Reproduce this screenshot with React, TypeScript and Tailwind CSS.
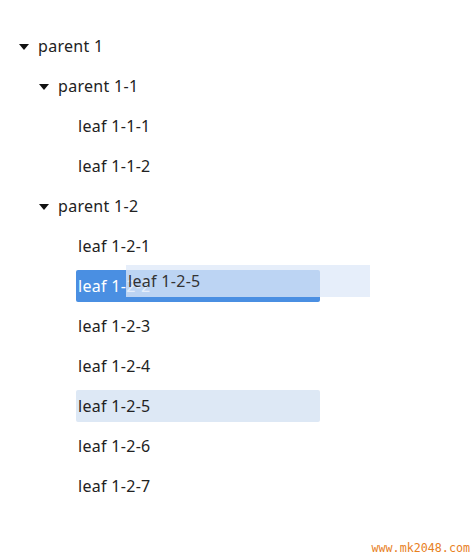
import React from "react";

type Row = { label: string; level: number; parent?: boolean; state?: "selected" | "hover" };

const rows: Row[] = [
  { label: "parent 1", level: 0, parent: true },
  { label: "parent 1-1", level: 1, parent: true },
  { label: "leaf 1-1-1", level: 2 },
  { label: "leaf 1-1-2", level: 2 },
  { label: "parent 1-2", level: 1, parent: true },
  { label: "leaf 1-2-1", level: 2 },
  { label: "leaf 1-2-2", level: 2, state: "selected" },
  { label: "leaf 1-2-3", level: 2 },
  { label: "leaf 1-2-4", level: 2 },
  { label: "leaf 1-2-5", level: 2, state: "hover" },
  { label: "leaf 1-2-6", level: 2 },
  { label: "leaf 1-2-7", level: 2 },
];

const indent: Record<number, string> = { 0: "pl-[36px]", 1: "pl-[56px]", 2: "pl-[76px]" };

function Caret() {
  return (
    <svg width="10" height="6" viewBox="0 0 10 6" className="absolute left-[-17px] top-[14px]">
      <path d="M0 0 L10 0 L5 6 Z" fill="#111" />
    </svg>
  );
}

export default function App() {
  return (
    <div
      className="relative w-[473px] h-[555px] bg-white"
      style={{ fontFamily: '"Noto Sans", "Noto Sans CJK SC", sans-serif' }}
    >
      <div className="flex flex-col pt-[26px]">
        {rows.map((r) => (
          <div key={r.label} className={`flex my-[4px] ${indent[r.level]}`}>
            <div
              className={`relative w-[244px] h-[32px] flex items-center pl-[2px] text-[16px] tracking-[0.3px] rounded-[2px] ${
                r.state === "selected"
                  ? "bg-[#4a8fe2] text-white"
                  : r.state === "hover"
                  ? "bg-[#dde8f5] text-[#222]"
                  : "text-[#222]"
              }`}
            >
              {r.parent && <Caret />}
              <span className="leading-none">{r.label}</span>
            </div>
          </div>
        ))}
      </div>
      <div className="absolute left-[126px] top-[265px] w-[244px] h-[32px] flex items-center pl-[2px] bg-[rgba(222,233,248,0.77)] text-[16px] tracking-[0.3px] text-[#333]">
        <span className="leading-none">leaf 1-2-5</span>
      </div>
      <div
        className="absolute right-[3px] bottom-[0px] text-[11.7px] leading-[14px] text-[#e8801e]"
        style={{ fontFamily: '"DejaVu Sans Mono", monospace' }}
      >
        www.mk2048.com
      </div>
    </div>
  );
}
